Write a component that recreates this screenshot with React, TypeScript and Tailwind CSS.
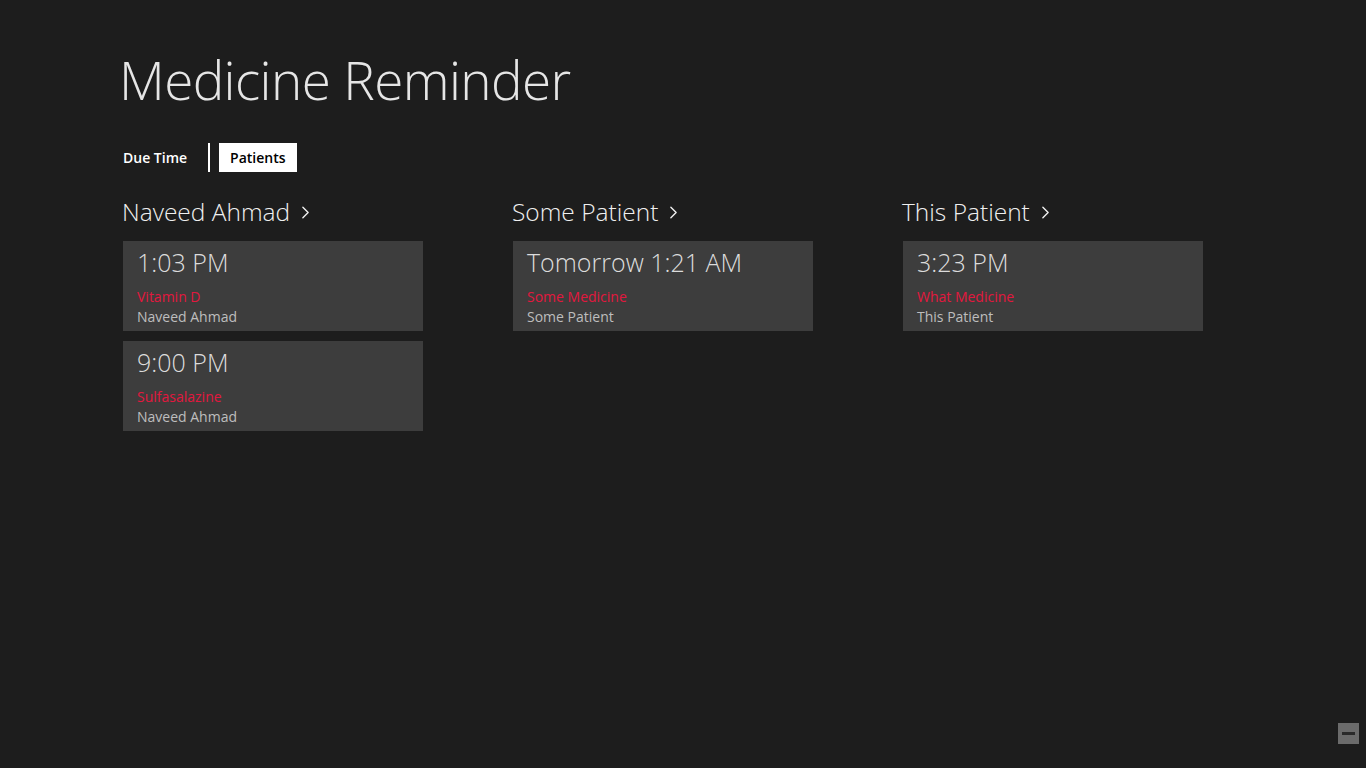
import { ChevronRight } from 'lucide-react'

type Reminder = {
  time: string
  medicine: string
  patient: string
}

type PatientGroup = {
  name: string
  reminders: Reminder[]
}

const groups: PatientGroup[] = [
  {
    name: 'Naveed Ahmad',
    reminders: [
      { time: '1:03 PM', medicine: 'Vitamin D', patient: 'Naveed Ahmad' },
      { time: '9:00 PM', medicine: 'Sulfasalazine', patient: 'Naveed Ahmad' },
    ],
  },
  {
    name: 'Some Patient',
    reminders: [{ time: 'Tomorrow 1:21 AM', medicine: 'Some Medicine', patient: 'Some Patient' }],
  },
  {
    name: 'This Patient',
    reminders: [{ time: '3:23 PM', medicine: 'What Medicine', patient: 'This Patient' }],
  },
]

const font = { fontFamily: '"Open Sans", "Noto Sans", sans-serif' }

function ReminderCard({ reminder }: { reminder: Reminder }) {
  return (
    <div className="h-[90px] w-[300px] bg-[#3d3d3d] px-[14px] pt-[5px]">
      <p className="text-[25px] font-light leading-[32px] text-[#dcdcdc]">{reminder.time}</p>
      <p className="mt-[9px] text-[14px] leading-[20px] text-[#e3173e]">{reminder.medicine}</p>
      <p className="text-[14px] leading-[20px] text-[#bdbdbd]">{reminder.patient}</p>
    </div>
  )
}

export default function App() {
  return (
    <div className="relative min-h-[768px] w-full bg-[#1d1d1d] text-white" style={font}>
      <div className="pl-[119px] pt-[45px]">
        <h1 className="text-[53px] font-light leading-[70px] tracking-[-0.6px] text-[#e6e6e6]">
          Medicine Reminder
        </h1>

        <div className="mt-[28px] flex h-[29px] items-stretch">
          <button type="button" className="pl-[4px] pr-[21px] text-[14px] font-semibold text-white">
            Due Time
          </button>
          <span className="w-[2px] bg-white" />
          <button type="button" className="ml-[9px] bg-white px-[11px] text-[14px] font-semibold text-black">
            Patients
          </button>
        </div>

        <div className="mt-[22px] flex gap-[90px] pl-[3px]">
          {groups.map(group => (
            <section key={group.name} className="w-[300px]">
              <h2 className="flex items-center gap-[5px] text-[24.5px] font-light leading-[36px] text-[#f0f0f0]">
                {group.name}
                <ChevronRight className="h-[21px] w-[21px]" strokeWidth={1.6} />
              </h2>
              <div className="mt-[11px] ml-[1px] flex flex-col gap-[10px]">
                {group.reminders.map(reminder => (
                  <ReminderCard key={reminder.time} reminder={reminder} />
                ))}
              </div>
            </section>
          ))}
        </div>
      </div>

      <div className="absolute left-[1338px] top-[723px] flex h-[21px] w-[21px] items-center justify-center bg-[#6b6b6b]">
        <span className="h-[3px] w-[13px] bg-[#2a2a2a]" />
      </div>
    </div>
  )
}
